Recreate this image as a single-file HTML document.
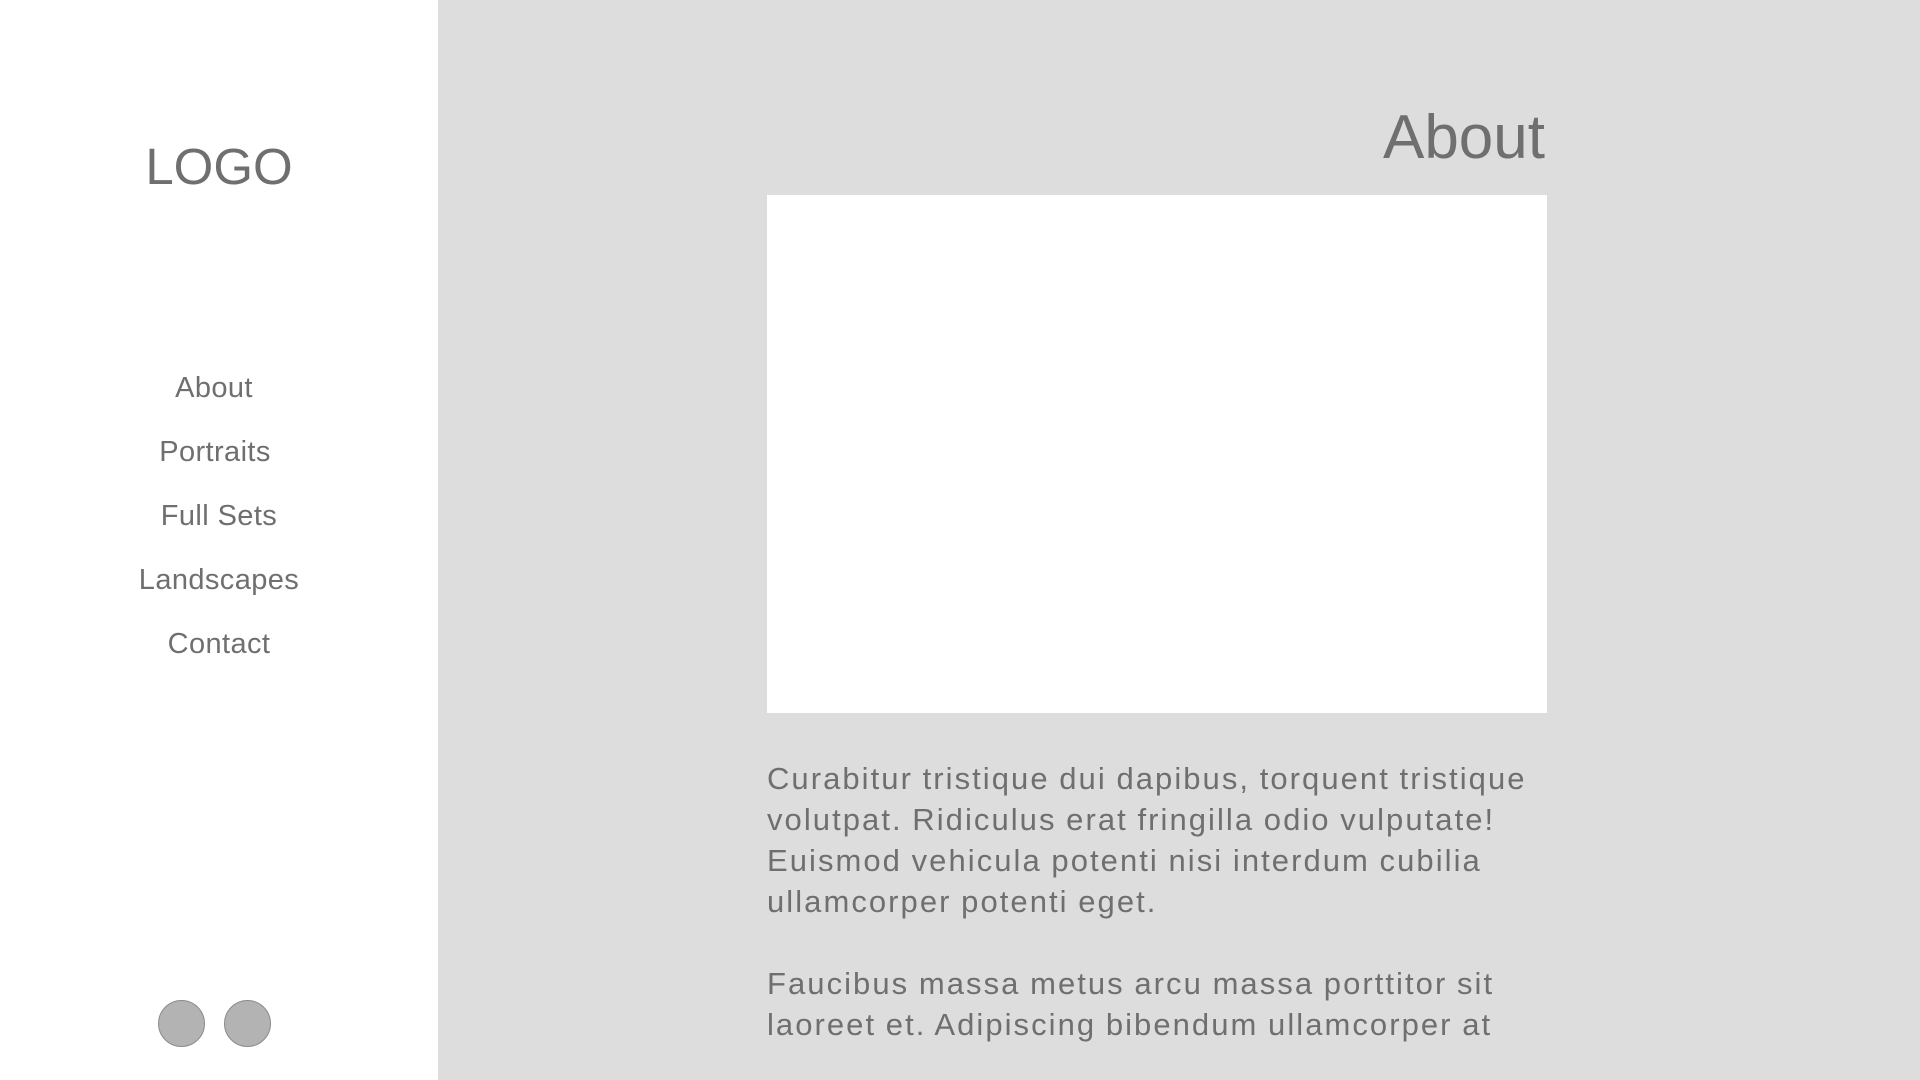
<!DOCTYPE html>
<html><head><meta charset="utf-8"><style>
*{margin:0;padding:0;box-sizing:border-box}
body{width:1920px;height:1080px;overflow:hidden;background:#dddddd;font-family:"Liberation Sans",Arial,sans-serif;color:#6f6f6f;position:relative}
.side{position:absolute;left:0;top:0;width:438px;height:1080px;background:#fff}
.logo{position:absolute;left:0;width:438px;text-align:center;top:134px;font-size:51px;line-height:66px}
.nav{position:absolute;left:0;width:438px;text-align:center;font-size:29px;line-height:34px;letter-spacing:0.4px}
.c{position:absolute;top:1000px;width:47px;height:47px;border-radius:50%;background:#b3b3b3;border:1px solid #8a8a8a}
h1{position:absolute;right:375px;top:100px;font-size:62px;font-weight:normal;line-height:76px}
.box{position:absolute;left:767px;top:195px;width:780px;height:518px;background:#fff}
.p{position:absolute;left:767px;font-size:31px;line-height:41px;white-space:nowrap;letter-spacing:2.05px;word-spacing:-1px}
</style></head><body>
<div class="side">
<div class="logo">LOGO</div>
<div class="nav" style="top:371px;left:-5px">About</div>
<div class="nav" style="top:435px;left:-4px">Portraits</div>
<div class="nav" style="top:499px">Full Sets</div>
<div class="nav" style="top:563px">Landscapes</div>
<div class="nav" style="top:627px">Contact</div>
<div class="c" style="left:158px"></div>
<div class="c" style="left:224px"></div>
</div>
<h1>About</h1>
<div class="box"></div>
<div class="p" style="top:758px">Curabitur tristique dui dapibus, torquent tristique<br>volutpat. Ridiculus erat fringilla odio vulputate!<br>Euismod vehicula potenti nisi interdum cubilia<br>ullamcorper potenti eget.</div>
<div class="p" style="top:963px">Faucibus massa metus arcu massa porttitor sit<br>laoreet et. Adipiscing bibendum ullamcorper at</div>
</body></html>
